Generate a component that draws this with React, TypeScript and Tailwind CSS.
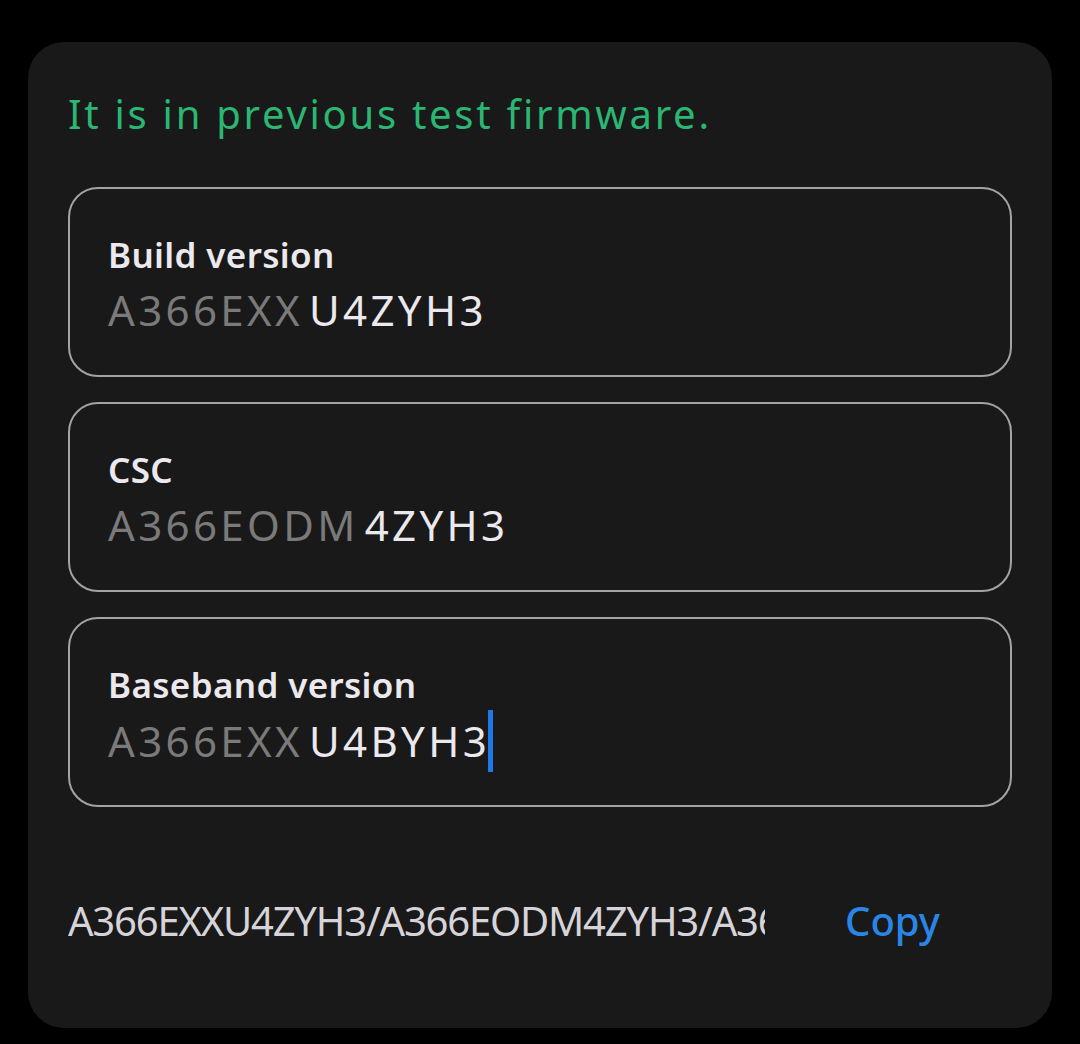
import React from "react";

type Field = {
  label: string;
  prefix: string;
  code: string;
  focused?: boolean;
};

const fields: Field[] = [
  { label: "Build version", prefix: "A366EXX", code: "U4ZYH3" },
  { label: "CSC", prefix: "A366EODM", code: "4ZYH3" },
  { label: "Baseband version", prefix: "A366EXX", code: "U4BYH3", focused: true },
];

function VersionField({ field }: { field: Field }) {
  return (
    <div className="h-[190px] rounded-[30px] border-2 border-[#a3a3a3] px-[38px] pt-[41px]">
      <p className="text-[35px] leading-[50px] font-semibold tracking-[0.01em] text-[#ece9ee]">{field.label}</p>
      <div className="flex items-center text-[42px] leading-[60px] tracking-[0.08em]">
        <span className="text-[#7a7a7a]">{field.prefix}</span>
        <span className="ml-[6px] text-[#ece9ee]">{field.code}</span>
        {field.focused && <span className="-ml-[2px] h-[62px] w-[5px] bg-[#1f78e8]" />}
      </div>
    </div>
  );
}

export default function App() {
  return (
    <div
      className="min-h-[1044px] w-[1080px] bg-black pt-[42px] pl-[28px]"
      style={{ fontFamily: '"Noto Sans", "Open Sans", sans-serif' }}
    >
      <div className="h-[986px] w-[1024px] rounded-[36px] bg-[#191919] px-[40px] pt-[44px]">
        <p className="text-[40px] leading-[56px] tracking-[0.068em] text-[#2bb673]">
          It is in previous test firmware.
        </p>

        <div className="mt-[45px] flex flex-col gap-[25px]">
          {fields.map((f) => (
            <VersionField key={f.label} field={f} />
          ))}
        </div>

        <div className="mt-[86px] flex items-center">
          <div className="w-[697px] shrink-0 overflow-hidden whitespace-nowrap text-[40px] leading-[56px] tracking-[-0.03em] text-[#d6d3d9]">
            A366EXXU4ZYH3/A366EODM4ZYH3/A366EXXU4BYH3
          </div>
          <button className="ml-[80px] text-[40px] leading-[56px] font-medium text-[#2a86e6]">
            Copy
          </button>
        </div>
      </div>
    </div>
  );
}
